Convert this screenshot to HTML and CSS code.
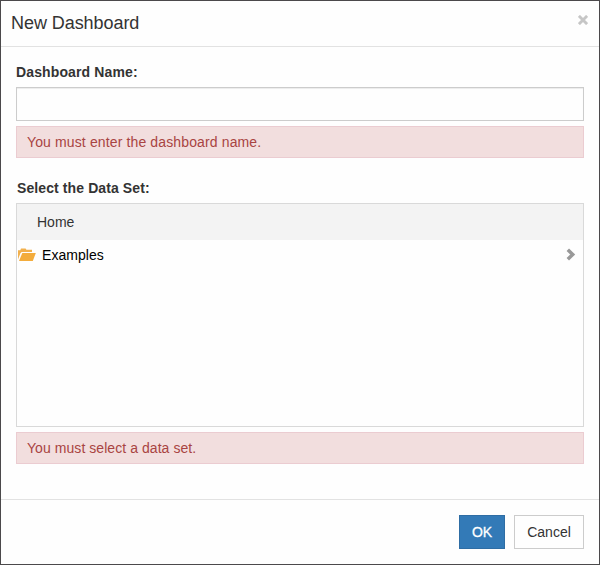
FILE: index.html
```html
<!DOCTYPE html>
<html lang="en">
<head>
<meta charset="utf-8">
<title>New Dashboard</title>
<link rel="stylesheet" href="styles.css">
</head>
<body>
<div class="modal">
  <header class="modal-header">
    <h1 class="title">New Dashboard</h1>
    <button class="close" aria-label="Close"><svg width="10" height="10" viewBox="0 0 10 10"><path d="M.9.9 9.1 9.1M9.1.9.9 9.1" stroke="#c6c6c6" stroke-width="2.9"/></svg></button>
  </header>
  <main class="modal-body">
    <label class="label" for="name">Dashboard Name:</label>
    <input class="field" id="name" type="text">
    <div class="alert alert-name">You must enter the dashboard name.</div>
    <div class="label label-set">Select the Data Set:</div>
    <div class="browser">
      <div class="crumb">Home</div>
      <div class="row">
        <svg class="folder" width="18" height="14" viewBox="0 0 18 14"><path d="M0 11.5V2.2H2.3L3 .5H7.6L8.4 1.8H14V4H3.6L2.4 5.2Z" fill="#f2b04c"/><path d="M4.3 5H17.8L14.8 13H1Z" fill="#f3ac3c"/></svg>
        <span class="row-name">Examples</span>
        <svg class="chevron" width="10" height="14" viewBox="0 0 10 14"><path d="M1.8 1.7 6.7 6.5 1.8 11.3" fill="none" stroke="#999" stroke-width="3.5"/></svg>
      </div>
    </div>
    <div class="alert alert-set">You must select a data set.</div>
  </main>
  <footer class="modal-footer">
    <button class="btn btn-primary">OK</button>
    <button class="btn btn-cancel">Cancel</button>
  </footer>
</div>
</body>
</html>
```
FILE: styles.css
```css
* { box-sizing: border-box; }
body {
  margin: 0;
  font: 14px/20px "Liberation Sans", Arial, sans-serif;
  color: #333;
}
.modal {
  display: flex;
  flex-direction: column;
  width: 600px;
  height: 565px;
  border: 1px solid #4b494b;
  background: #fefefe;
}
.modal-header {
  display: flex;
  justify-content: space-between;
  height: 46px;
  padding: 9px 11px 0 10px;
  border-bottom: 1px solid #e2e2e2;
}
.title {
  margin: 0;
  font-size: 18px;
  font-weight: 400;
  line-height: 26px;
  letter-spacing: -0.06px;
}
.close {
  display: block;
  height: 10px;
  margin-top: 5px;
  padding: 0;
  border: 0;
  background: none;
}
.close svg { display: block; }
.modal-body {
  flex: 1;
  padding: 15px 15px 0;
}
.label {
  display: block;
  margin-bottom: 5px;
  font-weight: 700;
  letter-spacing: 0.13px;
}
.label-set {
  margin-top: 20px;
  padding-left: 1px;
  letter-spacing: 0.1px;
}
.field {
  display: block;
  width: 100%;
  height: 34px;
  padding: 6px 12px;
  border: 1px solid #ccc;
  border-radius: 0;
  background: #fefefe;
  box-shadow: inset 0 1px 1px rgba(0, 0, 0, 0.075);
  font: inherit;
}
.alert {
  height: 32px;
  margin-top: 5px;
  padding: 5px 10px;
  border: 1px solid #ebccd1;
  background: #f2dede;
  color: #a94442;
}
.alert-name { letter-spacing: 0.13px; }
.alert-set { letter-spacing: 0.06px; }
.browser {
  height: 224px;
  border: 1px solid #d9d9d9;
}
.crumb {
  height: 36px;
  padding: 8px 20px;
  background: #f3f3f3;
}
.row {
  display: flex;
  align-items: center;
  height: 30px;
  padding: 0 7px 0 1px;
  color: #000;
}
.row-name {
  flex: 1;
  margin-left: 6px;
  letter-spacing: 0.05px;
}
.modal-footer {
  display: flex;
  justify-content: flex-end;
  gap: 9px;
  height: 65px;
  padding: 15px;
  border-top: 1px solid #e2e2e2;
}
.btn {
  height: 34px;
  padding: 0;
  border: 1px solid #ccc;
  background: #fefefe;
  color: #333;
  font: inherit;
}
.btn-primary {
  width: 46px;
  border-color: #2e6da4;
  background: #337ab7;
  color: #fff;
  -webkit-text-stroke: 0.3px #fff;
}
.btn-cancel { width: 70px; }
```
